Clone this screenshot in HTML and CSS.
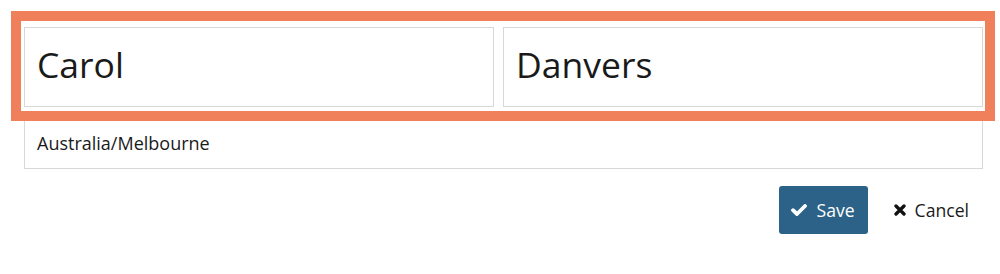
FILE: index.html
```html
<!DOCTYPE html>
<html>
<head>
<meta charset="utf-8">
<link rel="stylesheet" href="styles.css">
</head>
<body>
<div class="page">
  <form class="form">
    <div class="name-row">
      <div class="field field-lg">Carol</div>
      <div class="field field-lg">Danvers</div>
    </div>
    <div class="field field-sm">Australia/Melbourne</div>
    <div class="actions">
      <button type="button" class="btn btn-save">
        <svg class="icon-check" width="16" height="12" viewBox="0 0 16 12"><polyline points="2,6.2 6,10 14,2" fill="none" stroke="#fff" stroke-width="3.8" stroke-linecap="round" stroke-linejoin="round"/></svg>
        <span>Save</span>
      </button>
      <button type="button" class="btn btn-cancel">
        <svg class="icon-x" width="12" height="12" viewBox="0 0 12 12"><path d="M2 2L10 10M10 2L2 10" fill="none" stroke="#111" stroke-width="3.3" stroke-linecap="round"/></svg>
        <span>Cancel</span>
      </button>
    </div>
  </form>
  <div class="highlight"></div>
</div>
</body>
</html>
```
FILE: styles.css
```css
* { box-sizing: border-box; }
html, body { margin: 0; padding: 0; background: #fff; }
body {
  font-family: "Open Sans", "Noto Sans", sans-serif;
  color: #1a1a1a;
}
.page {
  position: relative;
  width: 1000px;
  height: 274px;
  padding: 27px 0 0 24px;
}
.form {
  width: 959px;
}
.name-row {
  display: grid;
  grid-template-columns: 470px 480px;
  column-gap: 9px;
}
.field {
  border: 1px solid #d7d7d7;
  background: #fff;
  padding-left: 12px;
  white-space: nowrap;
}
.field-lg {
  height: 80px;
  font-size: 35.5px;
  line-height: 72px;
  padding-bottom: 5px;
}
.field-sm {
  margin-top: 10px;
  height: 52px;
  font-size: 18px;
  line-height: 50px;
}
.actions {
  display: flex;
  justify-content: flex-end;
  align-items: center;
  gap: 11px;
  margin-top: 17px;
}
.btn {
  display: flex;
  align-items: center;
  border: none;
  font-family: "Open Sans", "Noto Sans", sans-serif;
  font-size: 17.6px;
  height: 48px;
  cursor: pointer;
}
.btn-save {
  background: #2c6287;
  color: #fff;
  border-radius: 3px;
  padding: 0 13px 0 12px;
  gap: 10px;
}
.btn-cancel {
  background: transparent;
  color: #1a1a1a;
  padding: 0 14px 0 15px;
  gap: 9px;
}
.icon-check, .icon-x { display: block; flex: none; }
.highlight {
  position: absolute;
  left: 11px;
  top: 11px;
  width: 984px;
  height: 110px;
  border: 10px solid #f0805b;
  pointer-events: none;
}
```
